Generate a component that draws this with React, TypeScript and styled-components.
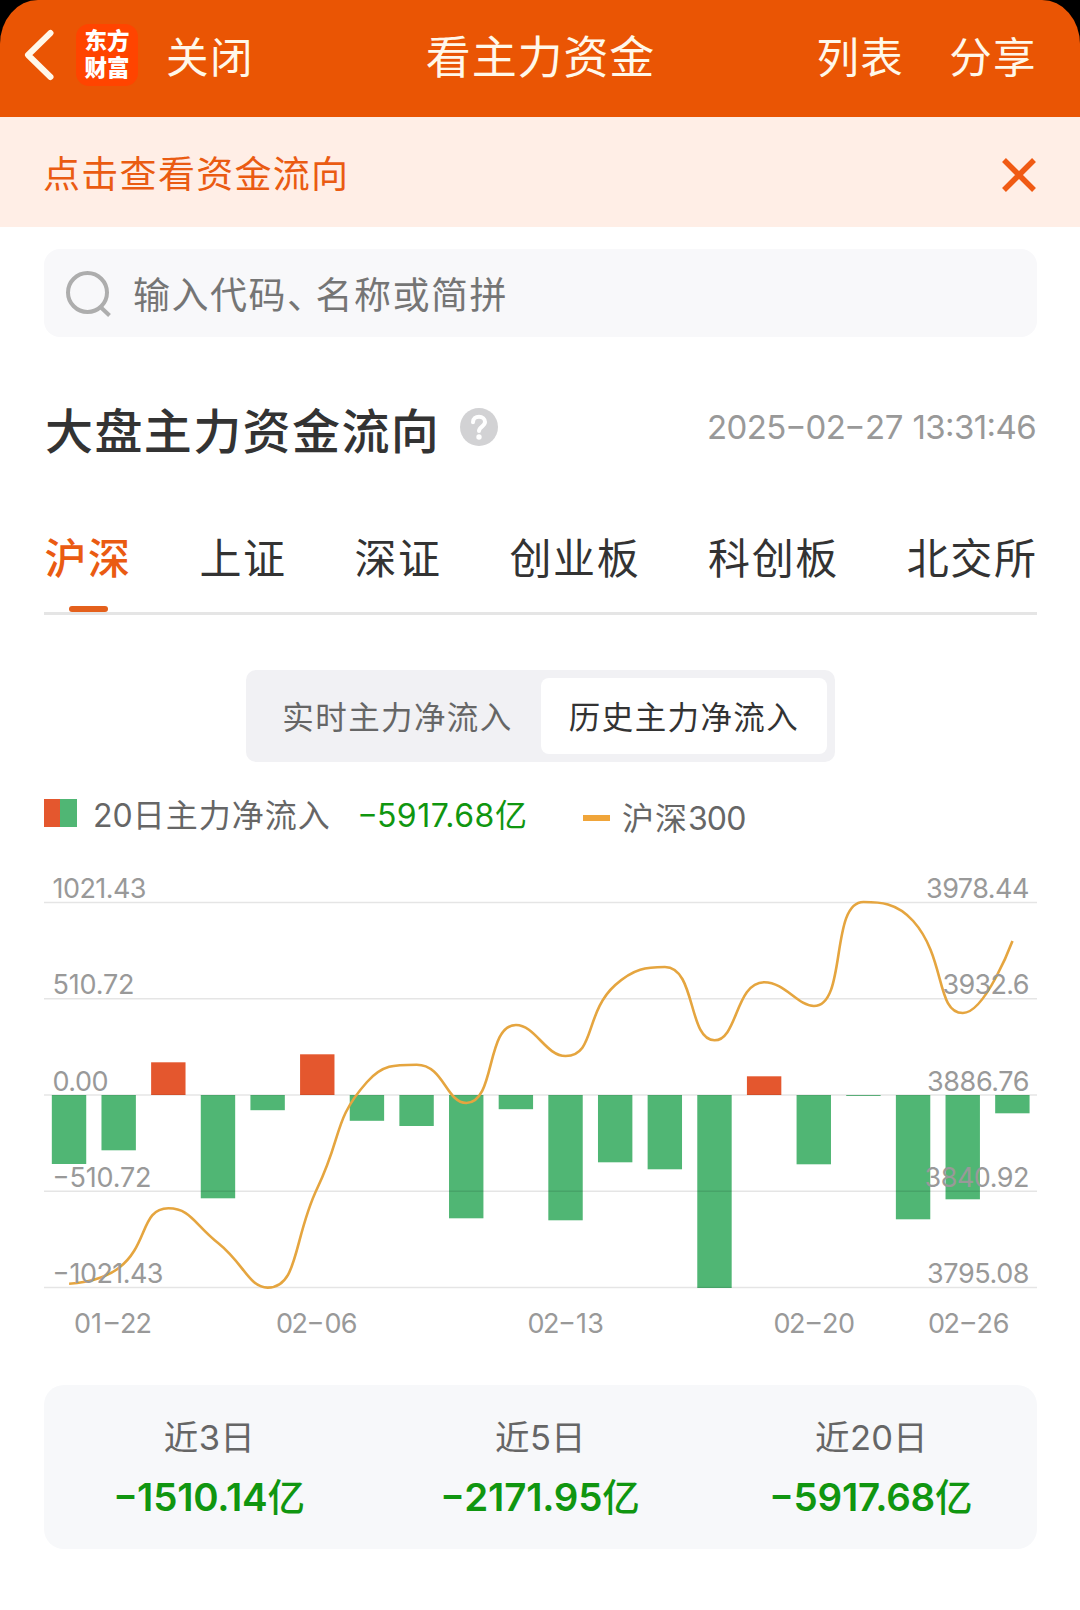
import React from "react";
import styled, { createGlobalStyle, css } from "styled-components";

const GlobalStyle = createGlobalStyle`
  * { box-sizing: border-box; }
  body {
    margin: 0;
    background: #fff;
    font-family: "Noto Sans CJK SC", sans-serif;
  }
`;

const Page = styled.div`
  width: 1080px;
  height: 1610px;
  overflow: hidden;
  background: #fff;
`;

const HeaderBack = styled.div`
  background: #000;
`;

const Header = styled.header`
  height: 117px;
  padding: 0 24px 7px;
  display: grid;
  grid-template-columns: 1fr auto 1fr;
  align-items: center;
  background: #ea5504;
  color: #fff8ea;
  border-radius: 38px 38px 0 0 / 44px 44px 0 0;
  white-space: nowrap;
`;

const HeaderSide = styled.div<{ $end?: boolean }>`
  display: flex;
  align-items: center;
  justify-content: ${(p) => (p.$end ? "flex-end" : "flex-start")};
  gap: ${(p) => (p.$end ? "45px" : "0")};
  padding-right: ${(p) => (p.$end ? "19px" : "0")};
`;

const HeaderTitle = styled.h1`
  margin: 0;
  padding: 0 0 1px 1px;
  font-size: 45px;
  font-weight: 400;
  line-height: 60px;
  letter-spacing: 0.9px;
`;

const HeaderLink = styled.span`
  padding-bottom: 1px;
  font-size: 42.5px;
  line-height: 60px;
  letter-spacing: 1.4px;
`;

const BackIcon = styled.svg`
  width: 32px;
  height: 52px;
  margin-right: 20px;
`;

const Logo = styled.div`
  width: 62px;
  height: 62px;
  margin-right: 28px;
  padding: 2px 0;
  border-radius: 13px;
  background: #ff4400;
  color: #fff;
  font-size: 22.5px;
  font-weight: 900;
  line-height: 26.5px;
  text-align: center;
`;

const Notice = styled.div`
  height: 110px;
  padding: 0 44px 0 43px;
  display: flex;
  align-items: center;
  justify-content: space-between;
  background: #ffeee6;
  color: #ea5b12;
`;

const NoticeText = styled.span`
  padding-bottom: 0;
  font-size: 37px;
  line-height: 50px;
  letter-spacing: 1.3px;
`;

const CloseIcon = styled.svg`
  width: 34px;
  height: 34px;
  margin-top: 5px;
`;

const Body = styled.main`
  padding: 22px 43px 0 44px;
`;

const Search = styled.div`
  height: 88px;
  padding: 0 20px;
  display: flex;
  align-items: center;
  border-radius: 16px;
  background: #f8f8fa;
  color: #757575;
  font-size: 37px;
  letter-spacing: 1.5px;
`;

const SearchIcon = styled.svg`
  width: 48px;
  height: 48px;
  margin: 1px 21px 0 0;
`;

const SearchHint = styled.span`
  padding-bottom: 1px;
`;

const Comma = styled.span`
  margin-right: -10px;
`;

const TitleRow = styled.div`
  height: 72px;
  margin-top: 55px;
  display: flex;
  align-items: center;
`;

const Title = styled.h2`
  margin: 0 19px 0 1px;
  color: #333;
  font-size: 48px;
  font-weight: 500;
  line-height: 72px;
  letter-spacing: 1.4px;
`;

const HelpIcon = styled.svg`
  width: 40px;
  height: 40px;
  margin-top: -2px;
`;

const digits = css`
  font-family: Inter, "Noto Sans CJK SC", sans-serif;
  font-feature-settings: "case";
`;

const Dash = styled.span`
  display: inline-block;
  width: 0.6em;
  text-align: center;
  letter-spacing: 0;
  transform: scaleX(1.4);
`;

const Time = styled.span`
  ${digits}
  margin: -2px 1px 0 auto;
  color: #999;
  font-size: 33px;
  letter-spacing: -0.6px;
  word-spacing: 1px;
  white-space: nowrap;
`;

const Tabs = styled.nav`
  height: 112px;
  margin-top: 39px;
  padding: 0 1px 0 0.5px;
  display: flex;
  justify-content: space-between;
  align-items: flex-end;
  border-bottom: 3px solid #e5e5e5;
`;

const Tab = styled.div<{ $active?: boolean }>`
  height: 86px;
  display: flex;
  flex-direction: column;
  align-items: center;
  justify-content: space-between;
  color: ${(p) => (p.$active ? "#ea5b12" : "#333")};
  font-size: 42px;
  font-weight: ${(p) => (p.$active ? 500 : 400)};
  line-height: 60px;
  letter-spacing: 1.6px;
  margin-right: -1.6px;
  &::after {
    content: "";
    width: 39px;
    height: 6px;
    border-radius: 3px;
    background: ${(p) => (p.$active ? "#e4601c" : "transparent")};
  }
`;

const Segment = styled.div`
  width: 589px;
  height: 92px;
  margin: 55px 0 0 202px;
  padding: 8px;
  display: grid;
  grid-template-columns: 287px 286px;
  border-radius: 10px;
  background: #f1f1f4;
`;

const SegmentItem = styled.div<{ $active?: boolean }>`
  display: flex;
  align-items: center;
  justify-content: center;
  padding-bottom: 3px;
  border-radius: 8px;
  background: ${(p) => (p.$active ? "#fff" : "transparent")};
  color: ${(p) => (p.$active ? "#333" : "#666")};
  font-size: 31.5px;
  letter-spacing: 1.4px;
`;

const Legend = styled.div`
  height: 60px;
  margin-top: 22px;
  display: flex;
  align-items: center;
  color: #666;
  font-size: 32px;
  line-height: 48px;
  letter-spacing: 1px;
  white-space: nowrap;
`;

const Swatch = styled.i`
  width: 33px;
  height: 28px;
  margin: 0 16px 2px 0;
  background: linear-gradient(90deg, #e4572e 50%, #50b674 50%);
`;

const Num = styled.span<{ $spacing?: number }>`
  ${digits}
  letter-spacing: ${(p) => p.$spacing ?? 0}px;
`;

const LegendTotal = styled.span`
  margin-left: 27px;
  color: #109610;
`;

const LineKey = styled.i`
  width: 27px;
  height: 6px;
  margin: 8px 12px 0 55px;
  background: #f0a53a;
`;

const IndexName = styled.span`
  margin-top: 6px;
`;

const Chart = styled.svg`
  display: block;
  width: 993px;
  height: 500px;
  margin-top: 28px;
`;

const AxisText = styled.text`
  ${digits}
  font-size: 27px;
  fill: #999;
`;

const Summary = styled.section`
  height: 164px;
  margin-top: 13px;
  padding-top: 24px;
  display: grid;
  grid-template-columns: repeat(3, 1fr);
  border-radius: 20px;
  background: #f7f8fa;
  text-align: center;
`;

const SummaryLabel = styled.div`
  color: #666;
  font-size: 34.5px;
  line-height: 52px;
  letter-spacing: 0.6px;
`;

const SummaryValue = styled.div`
  margin-top: 3px;
  color: #109610;
  font-size: 37.5px;
  font-weight: 500;
  line-height: 56px;
`;

const StrongNum = styled.span`
  ${digits}
  font-size: 38.5px;
  font-weight: 600;
  letter-spacing: -0.2px;
`;

const BAND = 993 / 20;
const BAR_WIDTH = 34.4;
const TOP = 30.5;
const STEP = 96.25;
const ZERO = TOP + STEP * 2;

/** Signed bar heights in pixels, positive for inflow. */
const flows = [
  -69, -55.3, 32.7, -103.3, -15.2, 40.7, -25.8, -31, -123.3, -14.2, -125.3,
  -67.3, -74.3, -193, 18.7, -69.3, -0.9, -124.3, -104.3, -18.3,
];

/** Vertical positions of the index closes. */
const closes = [
  411.7, 396, 336.3, 371, 415.6, 316, 210, 192.7, 231, 153, 184, 113, 95, 168.3,
  110.3, 134, 30, 49, 141, 69,
];

const points = closes.map((y, i) => [BAND * (i + 0.5) + 0.3, y]);

const clamp = (v: number, a: number, b: number) =>
  Math.max(Math.min(v, Math.max(a, b)), Math.min(a, b));

/** Cubic smoothing whose control points never leave the box of their segment. */
function smoothPath(pts: number[][], smooth = 0.5) {
  let d = `M${pts[0][0]} ${pts[0][1]}`;
  let c0 = pts[0];
  for (let i = 1; i < pts.length; i++) {
    const prev = pts[i - 1];
    const p = pts[i];
    const next = pts[i + 1];
    let c1 = p;
    let nextC0 = p;
    if (next) {
      const lp = Math.hypot(p[0] - prev[0], p[1] - prev[1]);
      const ln = Math.hypot(next[0] - p[0], next[1] - p[1]);
      const r = ln / (ln + lp);
      const out = [0, 1].map((k) =>
        clamp(p[k] + (next[k] - prev[k]) * smooth * r, p[k], next[k])
      );
      c1 = [0, 1].map((k) =>
        clamp(p[k] - ((out[k] - p[k]) * lp) / ln, prev[k], p[k])
      );
      nextC0 = [0, 1].map((k) => p[k] + ((p[k] - c1[k]) * ln) / lp);
    }
    d += `C${c0[0]} ${c0[1]} ${c1[0]} ${c1[1]} ${p[0]} ${p[1]}`;
    c0 = nextC0;
  }
  return d;
}

type Part = [string, number];

/** Runs of each label with the width each run takes. */
const leftAxis: Part[][] = [
  [["1021.43", 94]],
  [["510.72", 82]],
  [["0.00", 56]],
  [["-", 17], ["510.72", 82]],
  [["-", 17], ["1021.43", 94]],
];
const rightAxis: Part[][] = [
  [["3978.44", 103.5]],
  [["3932.6", 87]],
  [["3886.76", 102.5]],
  [["3840.92", 105]],
  [["3795.08", 102.5]],
];
const dates: { x: number; parts: Part[] }[] = [
  { x: 30, parts: [["01", 28], ["-", 18], ["22", 32]] },
  { x: 232, parts: [["02", 32], ["-", 18], ["06", 33]] },
  { x: 483.5, parts: [["02", 32], ["-", 18], ["13", 28]] },
  { x: 729.5, parts: [["02", 32], ["-", 18], ["20", 33]] },
  { x: 884, parts: [["02", 32], ["-", 18], ["26", 33]] },
];

const tabs = ["沪深", "上证", "深证", "创业板", "科创板", "北交所"];
const summary = [
  ["3", "1510.14"],
  ["5", "2171.95"],
  ["20", "5917.68"],
];

function AxisLabel({ x, y, parts }: { x: number; y: number; parts: Part[] }) {
  return (
    <AxisText x={x} y={y}>
      {parts.map(([t, w], i) => (
        <tspan key={i} textLength={w} lengthAdjust={t === "-" ? "spacingAndGlyphs" : "spacing"}>
          {t}
        </tspan>
      ))}
    </AxisText>
  );
}

function FlowChart() {
  return (
    <Chart viewBox="0 0 993 500">
      {flows.map((h, i) => (
        <rect
          key={i}
          x={BAND * (i + 0.5) - BAR_WIDTH / 2 + 0.2}
          y={h > 0 ? ZERO - h : ZERO}
          width={BAR_WIDTH}
          height={Math.abs(h)}
          fill={h > 0 ? "#e4572e" : "#50b674"}
        />
      ))}
      {[0, 1, 2, 3, 4].map((i) => (
        <rect key={i} x="0" y={TOP + STEP * i - 0.75} width="993" height="1.5" fill="#000" fillOpacity="0.1" />
      ))}
      <path d={smoothPath(points)} fill="none" stroke="#e5a53f" strokeWidth="2.6" />
      {leftAxis.map((parts, i) => (
        <AxisLabel key={i} x={8.5} y={TOP + STEP * i - 4.3} parts={parts} />
      ))}
      {rightAxis.map((parts, i) => (
        <AxisLabel key={i} x={985.5 - parts[0][1]} y={TOP + STEP * i - 4.3} parts={parts} />
      ))}
      {dates.map((d) => (
        <AxisLabel key={d.x} x={d.x} y={460.5} parts={d.parts} />
      ))}
    </Chart>
  );
}

export default function App() {
  return (
    <Page>
      <GlobalStyle />
      <HeaderBack>
        <Header>
          <HeaderSide>
            <BackIcon viewBox="0 0 32 52" fill="none" stroke="#fff8ea" strokeWidth="6" strokeLinecap="round" strokeLinejoin="round">
              <path d="M26.5 4 4 26l22.5 22" />
            </BackIcon>
            <Logo>
              东方
              <br />
              财富
            </Logo>
            <HeaderLink>关闭</HeaderLink>
          </HeaderSide>
          <HeaderTitle>看主力资金</HeaderTitle>
          <HeaderSide $end>
            <HeaderLink>列表</HeaderLink>
            <HeaderLink>分享</HeaderLink>
          </HeaderSide>
        </Header>
      </HeaderBack>
      <Notice>
        <NoticeText>点击查看资金流向</NoticeText>
        <CloseIcon viewBox="0 0 34 34" stroke="#f05a14" strokeWidth="5.5">
          <path d="M2 2 32 32M32 2 2 32" />
        </CloseIcon>
      </Notice>
      <Body>
        <Search>
          <SearchIcon viewBox="0 0 48 48" fill="none" stroke="#adadad" strokeWidth="4">
            <circle cx="23.5" cy="22.5" r="19.5" />
            <path d="m36.5 37 9 8.5" />
          </SearchIcon>
          <SearchHint>
            输入代码<Comma>、</Comma>名称或简拼
          </SearchHint>
        </Search>
        <TitleRow>
          <Title>大盘主力资金流向</Title>
          <HelpIcon viewBox="0 0 40 40" fill="none">
            <circle cx="20" cy="20" r="19" fill="#d2d2d4" />
            <path d="M14 15.2c0-3.6 2.7-5.4 6-5.4s6 2.2 6 5.3c0 4.3-6 4.7-6 8.9" stroke="#fff" strokeWidth="4" strokeLinecap="round" />
            <circle cx="20" cy="30" r="2.7" fill="#fff" />
          </HelpIcon>
          <Time>
            2025<Dash>-</Dash>02<Dash>-</Dash>27 13:31:46
          </Time>
        </TitleRow>
        <Tabs>
          {tabs.map((t, i) => (
            <Tab key={t} $active={i === 0}>
              {t}
            </Tab>
          ))}
        </Tabs>
        <Segment>
          <SegmentItem>实时主力净流入</SegmentItem>
          <SegmentItem $active>历史主力净流入</SegmentItem>
        </Segment>
        <Legend>
          <Swatch />
          <span>
            <Num>20</Num>日主力净流入
          </span>
          <LegendTotal>
            <Num $spacing={0.5}>
              <Dash>-</Dash>5917.68
            </Num>
            亿
          </LegendTotal>
          <LineKey />
          <IndexName>
            沪深<Num $spacing={-0.8}>300</Num>
          </IndexName>
        </Legend>
        <FlowChart />
        <Summary>
          {summary.map(([n, v]) => (
            <div key={n}>
              <SummaryLabel>
                近<Num>{n}</Num>日
              </SummaryLabel>
              <SummaryValue>
                <StrongNum>
                  <Dash>-</Dash>
                  {v}
                </StrongNum>
                亿
              </SummaryValue>
            </div>
          ))}
        </Summary>
      </Body>
    </Page>
  );
}
